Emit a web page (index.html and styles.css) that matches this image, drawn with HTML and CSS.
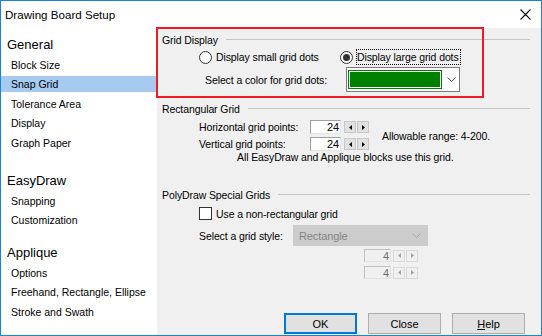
FILE: index.html
```html
<!DOCTYPE html>
<html lang="en">
<head>
  <meta charset="UTF-8" />
  <title>Drawing Board Setup</title>
  <link rel="stylesheet" href="styles.css">
</head>
<body>
  <div class="window">
    <div class="titlebar">
      <span class="title">Drawing Board Setup</span>
      <svg class="close" width="11" height="11" viewBox="0 0 11 11">
        <path d="M0.5 0.5 L10.5 10.5 M10.5 0.5 L0.5 10.5" stroke="#000" stroke-width="1.1" fill="none" />
      </svg>
    </div>

    <div class="content">
      <nav class="sidebar">
        <div class="heading">General</div>
        <div class="item">Block Size</div>
        <div class="item selected">Snap Grid</div>
        <div class="item">Tolerance Area</div>
        <div class="item">Display</div>
        <div class="item">Graph Paper</div>

        <div class="heading heading-easydraw">EasyDraw</div>
        <div class="item">Snapping</div>
        <div class="item">Customization</div>

        <div class="heading heading-applique">Applique</div>
        <div class="item">Options</div>
        <div class="item">Freehand, Rectangle, Ellipse</div>
        <div class="item">Stroke and Swath</div>
      </nav>

      <div class="main">
        <div class="highlight"></div>

        <div class="group-title"><span>Grid Display</span><i class="rule"></i></div>
        <div class="row radio-row">
          <label class="option option-small"><span class="radio"></span>Display small grid dots</label>
          <label class="option"><span class="radio checked"></span><span class="focus">Display large grid dots</span></label>
        </div>
        <div class="row color-row">
          <span class="color-label">Select a color for grid dots:</span>
          <div class="combo">
            <div class="swatch"><div class="swatch-fill"></div></div>
            <svg class="chevron" width="9" height="5" viewBox="0 0 9 5">
              <polyline points="0.5,0.5 4.5,4.5 8.5,0.5" stroke="#555" fill="none" />
            </svg>
          </div>
        </div>

        <div class="group-title rect-title"><span>Rectangular Grid</span><i class="rule"></i></div>
        <div class="spin-grid">
          <span class="spin-label">Horizontal grid points:</span>
          <div class="spin">
            <span class="field">24</span>
            <span class="arrows">
              <span class="arrow"><svg width="3" height="5" viewBox="0 0 3 5"><polygon points="3,0 0,2.5 3,5" fill="#000" /></svg></span>
              <span class="arrow"><svg width="3" height="5" viewBox="0 0 3 5"><polygon points="0,0 3,2.5 0,5" fill="#000" /></svg></span>
            </span>
          </div>
          <span class="range">Allowable range: 4-200.</span>
          <span class="spin-label">Vertical grid points:</span>
          <div class="spin">
            <span class="field">24</span>
            <span class="arrows">
              <span class="arrow"><svg width="3" height="5" viewBox="0 0 3 5"><polygon points="3,0 0,2.5 3,5" fill="#000" /></svg></span>
              <span class="arrow"><svg width="3" height="5" viewBox="0 0 3 5"><polygon points="0,0 3,2.5 0,5" fill="#000" /></svg></span>
            </span>
          </div>
        </div>
        <div class="note">All EasyDraw and Applique blocks use this grid.</div>

        <div class="group-title poly-title"><span>PolyDraw Special Grids</span><i class="rule"></i></div>
        <label class="row check-row"><span class="checkbox"></span>Use a non-rectangular grid</label>
        <div class="row style-row">
          <span class="style-label">Select a grid style:</span>
          <div class="combo-disabled">
            <span>Rectangle</span>
            <svg width="9" height="5" viewBox="0 0 9 5">
              <polyline points="0.5,0.5 4.5,4.5 8.5,0.5" stroke="#a8a8a8" fill="none" />
            </svg>
          </div>
        </div>
        <div class="spin disabled">
          <span class="field">4</span>
          <span class="arrows">
            <span class="arrow"><svg width="3" height="5" viewBox="0 0 3 5"><polygon points="3,0 0,2.5 3,5" fill="#a0a0a0" /></svg></span>
            <span class="arrow"><svg width="3" height="5" viewBox="0 0 3 5"><polygon points="0,0 3,2.5 0,5" fill="#a0a0a0" /></svg></span>
          </span>
        </div>
        <div class="spin disabled">
          <span class="field">4</span>
          <span class="arrows">
            <span class="arrow"><svg width="3" height="5" viewBox="0 0 3 5"><polygon points="3,0 0,2.5 3,5" fill="#a0a0a0" /></svg></span>
            <span class="arrow"><svg width="3" height="5" viewBox="0 0 3 5"><polygon points="0,0 3,2.5 0,5" fill="#a0a0a0" /></svg></span>
          </span>
        </div>

        <div class="buttons">
          <button class="default">OK</button>
          <button>Close</button>
          <button><u>H</u>elp</button>
        </div>
      </div>
    </div>
  </div>
</body>
</html>
```

FILE: styles.css
```css
* {
  box-sizing: border-box;
}

body {
  margin: 0;
  font-family: "Liberation Sans", Arial, sans-serif;
  font-size: 10.5px;
  color: #000;
  background: #fff;
}

.window {
  width: 542px;
  height: 336px;
  border: 1px solid #1883d7;
  display: flex;
  flex-direction: column;
  background: #fff;
}

.titlebar {
  height: 27px;
  display: flex;
  align-items: center;
  justify-content: space-between;
  padding: 0 10px 1px 4px;
}

.title {
  font-size: 11.6px;
}

.content {
  flex: 1;
  display: flex;
}

/* left navigation list */
.sidebar {
  width: 156px;
  background: #fff;
  padding-top: 9px;
}

.heading {
  font-size: 13px;
  height: 16px;
  line-height: 16px;
  padding-left: 6px;
}

.heading-easydraw {
  margin-top: 22.5px;
}

.heading-applique {
  margin-top: 17px;
}

.item {
  height: 16px;
  line-height: 16px;
  margin-top: 3.5px;
  padding-left: 10px;
  white-space: nowrap;
}

.item.selected {
  background: #a6caf0;
}

/* right settings panel */
.main {
  flex: 1;
  background: #f0f0f0;
  position: relative;
  padding: 6px 11px 0 0;
  letter-spacing: -0.1px;
}

.highlight {
  position: absolute;
  left: -1px;
  top: -1px;
  width: 328px;
  height: 71px;
  border: 2px solid #ed1c24;
}

.group-title {
  display: flex;
  align-items: center;
  height: 13px;
  line-height: 13px;
  padding-left: 5px;
}

.rule {
  flex: 1;
  height: 1px;
  background: #c4c4c4;
  margin: -2px 0 0 8px;
}

.row {
  display: flex;
  align-items: center;
  padding-left: 42px;
}

.radio-row {
  height: 16px;
  margin-top: 2px;
}

.option {
  display: flex;
  align-items: center;
  gap: 4px;
}

.option-small {
  width: 141px;
}

.radio {
  width: 13px;
  height: 13px;
  border: 1px solid #333;
  border-radius: 50%;
  background: #fff;
  display: flex;
  align-items: center;
  justify-content: center;
}

.radio.checked::after {
  content: "";
  width: 7px;
  height: 7px;
  border-radius: 50%;
  background: #333;
}

.focus {
  outline: 1px dotted #000;
  padding: 1px 1px 1px 0;
}

.color-row {
  margin-top: 2px;
  padding-left: 48px;
}

.color-label {
  width: 141px;
}

.combo {
  width: 114px;
  height: 25px;
  border: 1px solid #7a7a7a;
  background: #fff;
  display: flex;
  align-items: center;
  padding-left: 1px;
}

.swatch {
  width: 94px;
  height: 19px;
  border: 1px solid #008000;
  padding: 1px;
  background: #fff;
}

.swatch-fill {
  height: 100%;
  background: #008000;
}

.chevron {
  margin-left: 5px;
}

.rect-title {
  margin-top: 10.5px;
}

.spin-grid {
  display: grid;
  grid-template-columns: 111px auto auto;
  grid-template-rows: 14px 14px;
  justify-content: start;
  row-gap: 3px;
  align-items: center;
  padding-left: 42px;
  margin-top: 4.5px;
}

.range {
  grid-column: 3;
  grid-row: 1 / 3;
  margin-left: 13px;
}

.spin {
  display: flex;
  align-items: center;
}

.field {
  width: 31px;
  height: 14px;
  line-height: 13px;
  text-align: right;
  padding-right: 1px;
  background: #fff;
  border: 1px solid;
  border-color: #a0a0a0 #e3e3e3 #e3e3e3 #a0a0a0;
  font-size: 11px;
}

.arrows {
  display: flex;
  gap: 1px;
  margin-left: 3px;
}

.arrow {
  width: 12px;
  height: 12px;
  background: #e1e1e1;
  border: 1px solid #c8c8c8;
  display: flex;
  align-items: center;
  justify-content: center;
}

.note {
  height: 13px;
  line-height: 13px;
  padding-left: 80px;
}

.poly-title {
  margin-top: 24.5px;
}

.check-row {
  height: 13px;
  margin-top: 5.5px;
  gap: 4px;
}

.checkbox {
  width: 13px;
  height: 13px;
  border: 1px solid #333;
  background: #fff;
}

.style-row {
  margin-top: 5px;
}

.style-label {
  width: 94px;
}

.combo-disabled {
  width: 135px;
  height: 21px;
  background: #cccccc;
  border: 1px solid #cccccc;
  color: #838383;
  display: flex;
  align-items: center;
  justify-content: space-between;
  padding: 0 6px 0 5px;
  font-size: 11px;
}

.spin.disabled {
  margin: 3px 0 0 207px;
}

.spin.disabled + .spin.disabled {
  margin-top: 4px;
}

.spin.disabled .field {
  width: 27px;
  height: 13px;
  line-height: 12px;
  background: #f0f0f0;
  color: #6d6d6d;
  border-color: #c0c0c0 #e3e3e3 #e3e3e3 #c0c0c0;
}

.spin.disabled .arrows {
  margin-left: 2px;
}

.spin.disabled .arrow {
  background: #f0f0f0;
  border-color: #d9d9d9;
}

.buttons {
  display: flex;
  justify-content: flex-end;
  gap: 11px;
  margin-top: 34px;
  padding-right: 5px;
}

button {
  width: 73px;
  height: 21px;
  background: #e1e1e1;
  border: 1px solid #adadad;
  font-family: "Liberation Sans", Arial, sans-serif;
  font-size: 11px;
  color: #000;
  padding: 0;
}

button.default {
  border: 2px solid #0078d7;
}
```
